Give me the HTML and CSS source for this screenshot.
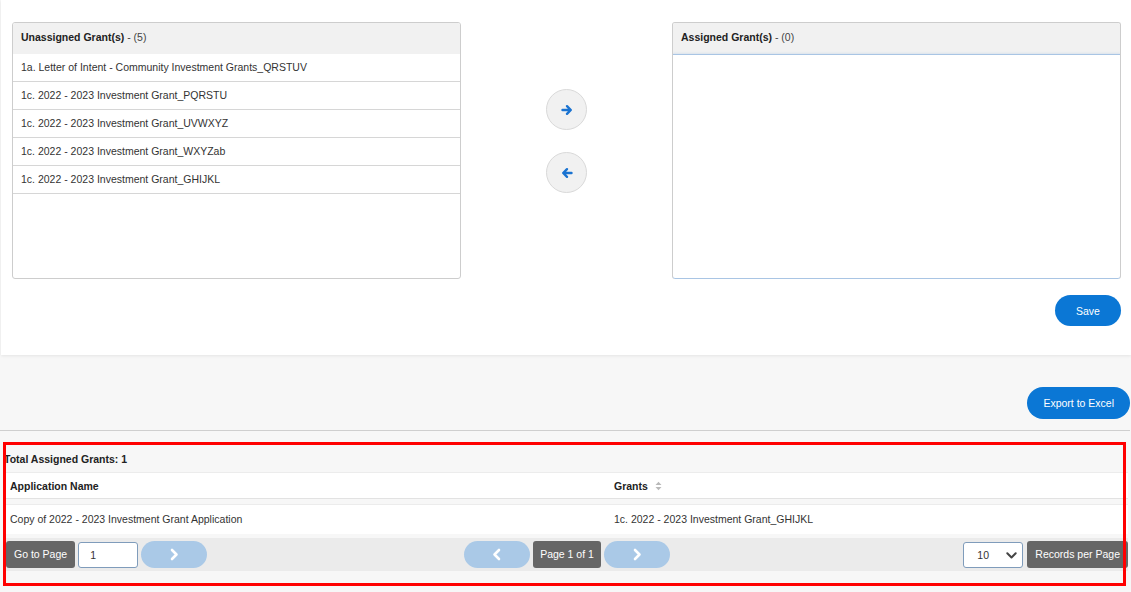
FILE: index.html
```html
<!DOCTYPE html>
<html lang="en">
<head>
	<meta charset="UTF-8">
	<meta name="viewport" content="width=device-width, initial-scale=1.0">
	<title>Assign Grants</title>
	<link rel="stylesheet" href="styles.css">
</head>

<body>

	<div class="assign-card">
		<div class="assign-grid">
			<div class="panel">
				<div class="panel-head"><b>Unassigned Grant(s)</b> - (5)</div>
				<ul class="panel-list">
					<li>1a. Letter of Intent - Community Investment Grants_QRSTUV</li>
					<li>1c. 2022 - 2023 Investment Grant_PQRSTU</li>
					<li>1c. 2022 - 2023 Investment Grant_UVWXYZ</li>
					<li>1c. 2022 - 2023 Investment Grant_WXYZab</li>
					<li>1c. 2022 - 2023 Investment Grant_GHIJKL</li>
				</ul>
			</div>

			<div class="move-buttons">
				<button class="move-btn" title="Assign">
					<svg width="12" height="12" viewBox="0 0 12 12"><path d="M1.5 6h8M6 2.2l3.8 3.8L6 9.8" fill="none" stroke="#1a73d1" stroke-width="2.4" stroke-linecap="round" stroke-linejoin="round"/></svg>
				</button>
				<button class="move-btn" title="Unassign">
					<svg width="12" height="12" viewBox="0 0 12 12"><path d="M10.5 6h-8M6 2.2L2.2 6 6 9.8" fill="none" stroke="#1a73d1" stroke-width="2.4" stroke-linecap="round" stroke-linejoin="round"/></svg>
				</button>
			</div>

			<div class="panel panel-assigned">
				<div class="panel-head"><b>Assigned Grant(s)</b> - (0)</div>
				<div class="panel-drop"></div>
			</div>
		</div>

		<div class="save-row">
			<button class="pill-btn save-btn">Save</button>
		</div>
	</div>

	<div class="export-row">
		<button class="pill-btn">Export to Excel</button>
	</div>

	<div class="grid-section">
		<div class="grid-total">Total Assigned Grants: 1</div>

		<div class="grid-row grid-header">
			<div class="cell">Application Name</div>
			<div class="cell">Grants
				<svg class="sort-icon" width="7" height="10" viewBox="0 0 7 10"><path d="M0.5 4L3.5 0.8 6.5 4z M0.5 6l3 3.2 3-3.2z" fill="#b9b9b9"/></svg>
			</div>
		</div>

		<div class="grid-row grid-data">
			<div class="cell">Copy of 2022 - 2023 Investment Grant Application</div>
			<div class="cell">1c. 2022 - 2023 Investment Grant_GHIJKL</div>
		</div>

		<div class="pager">
			<div class="pager-left">
				<span class="pager-label">Go to Page</span>
				<input class="page-input" type="text" value="1">
				<button class="pager-arrow">
					<svg width="10" height="13" viewBox="0 0 10 13"><path d="M3 2l4.5 4.5L3 11" fill="none" stroke="#fff" stroke-width="2.6" stroke-linecap="round" stroke-linejoin="round"/></svg>
				</button>
			</div>

			<div class="pager-center">
				<button class="pager-arrow">
					<svg width="10" height="13" viewBox="0 0 10 13"><path d="M7 2L2.5 6.5 7 11" fill="none" stroke="#fff" stroke-width="2.6" stroke-linecap="round" stroke-linejoin="round"/></svg>
				</button>
				<span class="pager-label page-info">Page 1 of 1</span>
				<button class="pager-arrow">
					<svg width="10" height="13" viewBox="0 0 10 13"><path d="M3 2l4.5 4.5L3 11" fill="none" stroke="#fff" stroke-width="2.6" stroke-linecap="round" stroke-linejoin="round"/></svg>
				</button>
			</div>

			<div class="pager-right">
				<span class="select-wrap">
					<select class="page-size">
						<option>10</option>
						<option>25</option>
						<option>50</option>
					</select>
					<svg class="select-caret" width="11" height="7" viewBox="0 0 11 7"><path d="M1.3 1.3l4.2 4.2 4.2-4.2" fill="none" stroke="#444" stroke-width="2" stroke-linecap="round" stroke-linejoin="round"/></svg>
				</span>
				<span class="pager-label">Records per Page</span>
			</div>
		</div>
	</div>

</body></html>
```

FILE: styles.css
```css
body {
	font-family: 'Liberation Sans', Arial, sans-serif;
	font-size: 10.5px;
	color: #333;
	background: #f7f7f7;
	margin: 0;
	overflow-x: hidden;
}

button,
input,
select {
	font-family: inherit;
	font-size: 10.5px;
}

/* top card with the two lists */

.assign-card {
	background: #fff;
	margin-left: 1px;
	padding: 22px 10px 29px 11px;
	box-shadow: 0 1px 3px rgba(0, 0, 0, 0.08);
}

.assign-grid {
	display: grid;
	grid-template-columns: 1fr 211px 1fr;
}

.panel {
	height: 257px;
	box-sizing: border-box;
	border: 1px solid #cdcdcd;
	border-radius: 3px;
	overflow: hidden;
	display: flex;
	flex-direction: column;
}

.panel-head {
	height: 31px;
	line-height: 28px;
	padding-left: 8px;
	background: #f1f1f1;
	color: #444;
	flex-shrink: 0;
}

.panel-head b {
	color: #222;
}

.panel-list {
	list-style: none;
	margin: 0;
	padding: 0;
}

.panel-list li {
	height: 27px;
	line-height: 27px;
	padding-left: 8px;
	border-bottom: 1px solid #d6d6d6;
	white-space: nowrap;
}

.panel-assigned {
	border-bottom: none;
}

.panel-drop {
	flex: 1;
	margin: 0 -1px;
	border: 1px solid #a9c5e4;
	border-radius: 0 0 3px 3px;
	box-shadow: 0 0 3px rgba(120, 165, 220, 0.35);
	background: #fff;
}

.move-buttons {
	display: flex;
	flex-direction: column;
	align-items: center;
	gap: 22px;
	padding-top: 67px;
}

.move-btn {
	width: 41px;
	height: 41px;
	border-radius: 50%;
	border: 1px solid #d9d9d9;
	background: #f1f1f1;
	padding: 0;
	display: flex;
	align-items: center;
	justify-content: center;
	cursor: pointer;
}

.save-row {
	display: flex;
	justify-content: flex-end;
	margin-top: 16px;
}

.pill-btn {
	height: 32px;
	min-width: 66px;
	padding: 0 16px;
	border: none;
	border-radius: 16px;
	background: #0b77d5;
	color: #fff;
	cursor: pointer;
}

.save-btn {
	height: 31px;
}

.export-row {
	display: flex;
	justify-content: flex-end;
	padding: 32px 0 11px;
	margin-right: 1px;
	border-bottom: 1px solid #cfcfcf;
}

/* assigned grants grid */

.grid-section {
	position: relative;
	margin: 11px 3px 0 4px;
	padding-bottom: 15px;
}

.grid-section::after {
	content: "";
	position: absolute;
	top: 0;
	bottom: 0;
	left: -1px;
	right: 2px;
	border: 3px solid #ff0000;
	pointer-events: none;
}

.grid-total {
	font-weight: bold;
	line-height: 19px;
	padding: 8px 0 3px;
	color: #222;
}

.grid-row {
	display: grid;
	grid-template-columns: 604px 1fr;
	background: #fff;
}

.grid-row .cell {
	padding-left: 6px;
	white-space: nowrap;
}

.grid-header {
	height: 27px;
	line-height: 26px;
	font-weight: bold;
	color: #222;
	border-top: 1px solid #ececec;
	border-bottom: 1px solid #e2e2e2;
	box-sizing: border-box;
	margin-bottom: 5px;
}

.sort-icon {
	margin-left: 4px;
	vertical-align: -1px;
}

.grid-data {
	height: 30px;
	line-height: 29px;
	border-top: 1px solid #ececec;
	box-sizing: border-box;
	margin-bottom: 4px;
}

.pager {
	display: grid;
	grid-template-columns: 1fr auto 1fr;
	align-items: center;
	height: 33px;
	padding: 0 0 0 2px;
	background: #ebebeb;
}

.pager-left,
.pager-center,
.pager-right {
	display: flex;
	align-items: center;
	gap: 3px;
}

.pager-right {
	justify-content: flex-end;
	gap: 4px;
}

.pager-label {
	height: 27px;
	line-height: 27px;
	padding: 0 8px;
	background: #666;
	color: #fff;
	border-radius: 3px;
	white-space: nowrap;
}

.page-info {
	padding: 0 7px;
}

.page-input {
	width: 60px;
	height: 26px;
	box-sizing: border-box;
	border: 1px solid #7f9cbb;
	border-radius: 3px;
	padding: 0 0 0 11px;
	color: #333;
	background: #fff;
}

.pager-arrow {
	width: 66px;
	height: 27px;
	border: none;
	border-radius: 14px;
	background: #aac9e7;
	padding: 0;
	display: flex;
	align-items: center;
	justify-content: center;
}

.select-wrap {
	position: relative;
	display: inline-block;
}

.page-size {
	appearance: none;
	-webkit-appearance: none;
	width: 60px;
	height: 26px;
	border: 1px solid #7f9cbb;
	border-radius: 3px;
	padding: 0 0 0 13px;
	background: #fff;
	color: #333;
	display: block;
}

.select-caret {
	position: absolute;
	right: 6px;
	top: 10px;
	pointer-events: none;
}
```
